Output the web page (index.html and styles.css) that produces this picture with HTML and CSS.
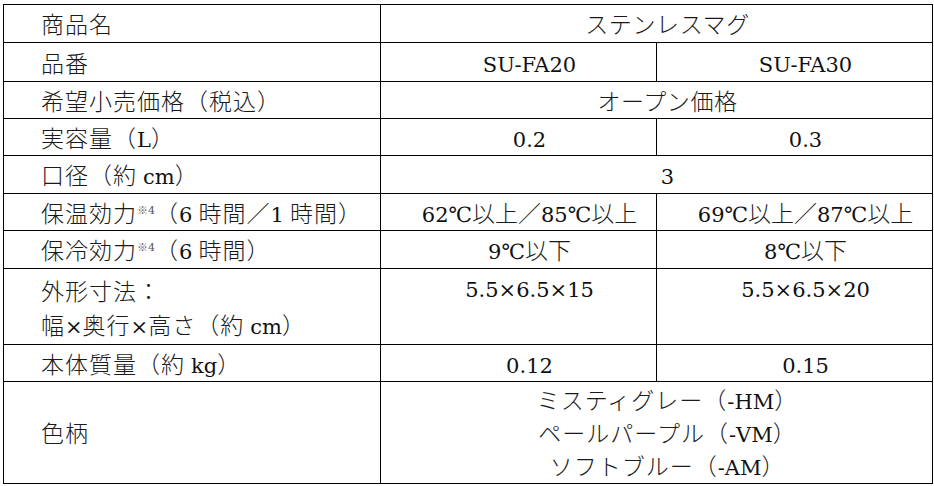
FILE: index.html
```html
<!DOCTYPE html>
<html lang="ja">
<head>
<meta charset="utf-8">
<title>ステンレスマグ 仕様</title>
<link rel="stylesheet" href="styles.css">
</head>
<body>
<table class="spec">
  <colgroup>
    <col class="c-label">
    <col class="c-val">
    <col class="c-val2">
  </colgroup>
  <tr class="r38">
    <td class="label">商品名</td>
    <td class="val kana" colspan="2">ステンレスマグ</td>
  </tr>
  <tr class="r39">
    <td class="label">品番</td>
    <td class="val"><span class="lat">SU-FA20</span></td>
    <td class="val"><span class="lat">SU-FA30</span></td>
  </tr>
  <tr class="r37">
    <td class="label">希望小売価格（税込）</td>
    <td class="val kana" colspan="2">オープン価格</td>
  </tr>
  <tr class="r37">
    <td class="label">実容量（<span class="lat">L</span>）</td>
    <td class="val"><span class="lat">0.2</span></td>
    <td class="val"><span class="lat">0.3</span></td>
  </tr>
  <tr class="r38">
    <td class="label">口径（約 <span class="lat">cm</span>）</td>
    <td class="val" colspan="2"><span class="lat">3</span></td>
  </tr>
  <tr class="r37">
    <td class="label">保温効力<sup class="note">※4</sup>（<span class="lat">6</span> 時間／<span class="lat">1</span> 時間）</td>
    <td class="val"><span class="lat">62℃</span>以上／<span class="lat">85℃</span>以上</td>
    <td class="val"><span class="lat">69℃</span>以上／<span class="lat">87℃</span>以上</td>
  </tr>
  <tr class="r38">
    <td class="label">保冷効力<sup class="note">※4</sup>（<span class="lat">6</span> 時間）</td>
    <td class="val"><span class="lat">9℃</span>以下</td>
    <td class="val"><span class="lat">8℃</span>以下</td>
  </tr>
  <tr class="r76">
    <td class="label multi">外形寸法：<br>幅<span class="lat">×</span>奥行<span class="lat">×</span>高さ（約 <span class="lat">cm</span>）</td>
    <td class="val top"><span class="lat">5.5×6.5×15</span></td>
    <td class="val top"><span class="lat">5.5×6.5×20</span></td>
  </tr>
  <tr class="r37">
    <td class="label">本体質量（約 <span class="lat">kg</span>）</td>
    <td class="val"><span class="lat">0.12</span></td>
    <td class="val"><span class="lat">0.15</span></td>
  </tr>
  <tr class="r102">
    <td class="label">色柄</td>
    <td class="val colors" colspan="2">ミスティグレー（<span class="lat">-HM</span>）<br>ペールパープル（<span class="lat">-VM</span>）<br>ソフトブルー（<span class="lat">-AM</span>）</td>
  </tr>
</table>
</body>
</html>
```
FILE: styles.css
```css
html, body {
  margin: 0;
  padding: 0;
  background: #ffffff;
}

body {
  padding: 4px 0 0 3px;
  font-family: "Noto Sans CJK JP", sans-serif;
  font-weight: 300;
  font-size: 23px;
  color: #1a1a1a;
}

.spec {
  border-collapse: collapse;
  table-layout: fixed;
  width: 929px;
}

.c-label { width: 377px; }
.c-val { width: 276px; }
.c-val2 { width: 276px; }

.spec td {
  border: 1px solid #000;
  padding: 0;
  line-height: 33px;
  vertical-align: middle;
  white-space: nowrap;
}

.label {
  text-align: left;
  padding-left: 37px !important;
  letter-spacing: 1px;
}

.val {
  text-align: center;
  padding-left: 22px !important;
}

.kana {
  letter-spacing: 0.6px;
}

.val.top {
  vertical-align: top;
  padding-top: 2px !important;
}

.label.multi {
  line-height: 34px;
}

.colors {
  line-height: 33px !important;
  letter-spacing: 1px;
}

.lat {
  font-family: "DejaVu Serif", "Liberation Serif", serif;
  font-weight: 400;
  font-size: 21px;
  line-height: 1;
  letter-spacing: 0;
  color: #111;
}

.note {
  font-family: "DejaVu Serif", "Liberation Serif", serif;
  font-size: 11px;
  vertical-align: 8px;
  line-height: 0;
  letter-spacing: 0;
  color: #555;
}

.r37 { height: 37px; }
.r38 { height: 38px; }
.r39 { height: 39px; }
.r76 { height: 76px; }
.r102 { height: 102px; }
```
